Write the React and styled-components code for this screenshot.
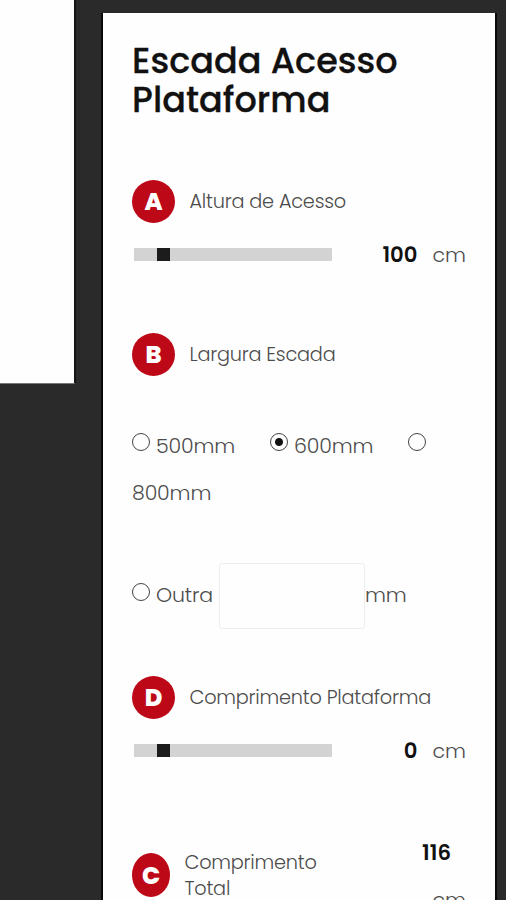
import { useState } from "react";
import styled, { createGlobalStyle } from "styled-components";

// This component contains the configurator for the platform access ladder
const App = () => {
  const [height, setHeight] = useState(100);
  const [width, setWidth] = useState("600");
  const [length, setLength] = useState(0);

  return (
    <>
      <GlobalStyle />
      <Page>
        <Preview />
        <Panel>
          <Title>Escada Acesso Plataforma</Title>

          <Heading>
            <Badge>A</Badge>
            <Label>Altura de Acesso</Label>
          </Heading>
          <SliderRow>
            <Slider
              type="range"
              min="72"
              max="300"
              value={height}
              onChange={(e) => setHeight(Number(e.target.value))}
            />
            <Value>{height}</Value>
            <Unit>cm</Unit>
          </SliderRow>

          <Heading $top="60px">
            <Badge>B</Badge>
            <Label>Largura Escada</Label>
          </Heading>
          <Options>
            {["500", "600", "800"].map((size) => (
              <Option key={size}>
                <Radio
                  type="radio"
                  name="width"
                  checked={width === size}
                  onChange={() => setWidth(size)}
                />
                {size}mm
              </Option>
            ))}
          </Options>
          <OtherRow>
            <Radio
              type="radio"
              name="width"
              checked={width === "other"}
              onChange={() => setWidth("other")}
            />
            <OtherText>Outra</OtherText>
            <OtherInput type="text" />
            <span>mm</span>
          </OtherRow>

          <Heading $top="47px">
            <Badge>D</Badge>
            <Label>Comprimento Plataforma</Label>
          </Heading>
          <SliderRow>
            <Slider
              type="range"
              min="-29"
              max="200"
              value={length}
              onChange={(e) => setLength(Number(e.target.value))}
            />
            <Value>{length}</Value>
            <Unit>cm</Unit>
          </SliderRow>

          <TotalRow>
            <Badge $width="38px">C</Badge>
            <TotalLabel>
              Comprimento
              <br />
              Total
            </TotalLabel>
            <Total>
              <TotalValue>116</TotalValue>
              <Unit>cm</Unit>
            </Total>
          </TotalRow>
        </Panel>
      </Page>
    </>
  );
};

export default App;

const GlobalStyle = createGlobalStyle`
  * {
    box-sizing: border-box;
  }

  body {
    margin: 0;
    background: #2a2a2a;
    font-family: Poppins, Inter, "Open Sans", sans-serif;
    font-weight: 300;
    color: #4c4c4c;
  }
`;

// Container for the entire page
const Page = styled.main`
  display: flex;
  justify-content: space-between;
  align-items: flex-start;
  width: 506px;
  height: 900px;
  padding-right: 9px;
  overflow: hidden;
`;

// Bottom corner of the drawing area beside the panel
const Preview = styled.div`
  width: 76px;
  height: 384px;
  background: #fefefe;
  border-right: 2px solid #151515;
  border-bottom: 1px solid #777;
`;

// White panel that holds all the fields
const Panel = styled.section`
  width: 396px;
  height: 887px;
  margin-top: 13px;
  padding: 29px 29px 0 29px;
  background: #fefefe;
  border: solid #080808;
  border-width: 0 2px;
  overflow: hidden;
`;

const Title = styled.h1`
  height: 138px;
  margin: 0;
  font-size: 35px;
  font-weight: 500;
  line-height: 38.5px;
  letter-spacing: 0.05px;
  color: #111;
  -webkit-text-stroke: 0.3px #111;
`;

// Badge and label on top of each field
const Heading = styled.div`
  display: flex;
  align-items: center;
  gap: 14.5px;
  margin-top: ${(props) => props.$top || "0"};
`;

const Badge = styled.span`
  display: flex;
  flex: none;
  align-items: center;
  justify-content: center;
  width: ${(props) => props.$width || "43px"};
  height: 43px;
  border-radius: 50%;
  background: #bd0817;
  color: #fff;
  font-size: 24px;
  font-weight: 800;
`;

const Label = styled.span`
  font-size: 19.3px;
  line-height: 26px;
  letter-spacing: -0.22px;
  white-space: nowrap;
`;

const SliderRow = styled.div`
  display: flex;
  align-items: center;
  height: 38px;
  margin-top: 12px;
  padding-left: 2px;
`;

const Slider = styled.input`
  appearance: none;
  width: 198px;
  height: 13px;
  margin: 0;
  background: #d3d3d3;

  &::-webkit-slider-thumb {
    appearance: none;
    width: 13px;
    height: 13px;
    background: #1c1c1c;
  }
`;

const Value = styled.strong`
  width: 86px;
  text-align: right;
  font-size: 21.2px;
  font-weight: 600;
  color: #111;
`;

const Unit = styled.span`
  margin-left: 15px;
  font-size: 20.5px;
`;

// Runs like text, so an option can break between its radio and its size
const Options = styled.div`
  margin-top: 46px;
  font-size: 20.5px;
  line-height: 47px;
  letter-spacing: -0.15px;
`;

const Option = styled.label`
  margin-right: 35px;
`;

const Radio = styled.input`
  appearance: none;
  flex: none;
  width: 18px;
  height: 18px;
  margin: 0 6px 0 0;
  border: 1.5px solid #444;
  border-radius: 50%;
  vertical-align: 2px;

  &:checked {
    background: radial-gradient(circle, #111 3.5px, transparent 4.5px);
  }
`;

const OtherRow = styled.div`
  display: flex;
  align-items: center;
  height: 66px;
  margin-top: 47px;
  font-size: 20.5px;
  line-height: 64px;
  letter-spacing: -0.15px;

  ${Radio} {
    margin-top: -8px;
  }

  & > span {
    margin-top: -2px;
  }
`;

const OtherText = styled.span`
  width: 63px;
`;

const OtherInput = styled.input`
  flex: none;
  width: 146px;
  height: 66px;
  border: 1px solid #eee;
  border-radius: 3px;
  background: #fefefe;
`;

const TotalRow = styled.div`
  display: flex;
  align-items: flex-start;
  margin-top: 81px;

  ${Badge} {
    height: 44px;
    margin-top: 3px;
  }
`;

const TotalLabel = styled(Label)`
  margin-left: 14.5px;
`;

const Total = styled.div`
  display: flex;
  flex-direction: column;
  align-items: flex-end;
  margin: -21px 0 0 auto;
  line-height: 47px;
`;

const TotalValue = styled(Value)`
  padding-right: 15px;
`;
